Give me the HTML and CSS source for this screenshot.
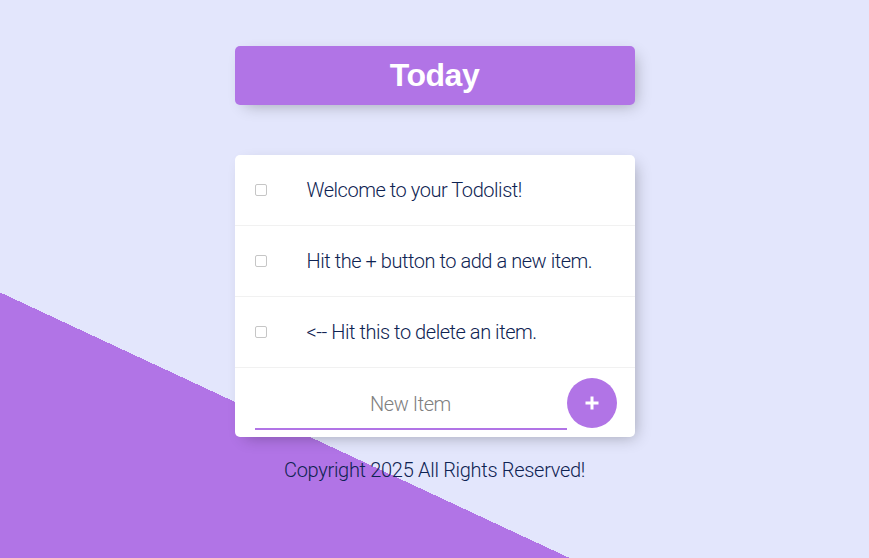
FILE: index.html
```html
<!DOCTYPE html>
<html lang="en">
<head>
<meta charset="utf-8">
<title>To-Do List</title>
<link rel="stylesheet" href="styles.css">
</head>
<body>
  <div class="box heading">
    <h1>Today</h1>
  </div>

  <div class="box list">
    <div class="item">
      <input type="checkbox" class="check">
      <p class="text">Welcome to your Todolist!</p>
    </div>
    <div class="item">
      <input type="checkbox" class="check">
      <p class="text">Hit the + button to add a new item.</p>
    </div>
    <div class="item">
      <input type="checkbox" class="check">
      <p class="text">&lt;-- Hit this to delete an item.</p>
    </div>
    <form class="item add-form">
      <input type="text" class="new-item" name="newItem" placeholder="New Item" autocomplete="off">
      <button type="button" class="add-btn" aria-label="Add">
        <svg width="16" height="16" viewBox="0 0 16 16"><path d="M8 1.5v13M1.5 8h13" stroke="#fff" stroke-width="3" fill="none"/></svg>
      </button>
    </form>
  </div>

  <footer class="footer">Copyright 2025 All Rights Reserved!</footer>
</body>
</html>
```

FILE: styles.css
```css
html {
  background-color: #E3E6FC;
  background-image: linear-gradient(25deg, #B174E6 50%, #E3E6FC 50%);
  min-height: 990px;
}

body {
  margin: 0;
  padding-top: 46px;
  font-family: Roboto, "Liberation Sans", sans-serif;
}

.box {
  width: 400px;
  margin: 0 auto;
  background: #fff;
  border-radius: 5px;
  box-shadow: 5px 5px 15px -5px rgba(0, 0, 0, 0.3);
}

.heading {
  background-color: #B174E6;
  text-align: center;
}

.heading h1 {
  margin: 0;
  padding: 10px;
  color: #fff;
  font-family: "Liberation Sans", Arial, sans-serif;
  font-weight: 700;
  font-size: 32px;
  line-height: 39px;
  letter-spacing: -0.5px;
}

.list {
  margin-top: 50px;
}

.item {
  min-height: 70px;
  display: flex;
  align-items: center;
  border-bottom: 1px solid #F1F1F1;
}

.check {
  appearance: none;
  -webkit-appearance: none;
  box-sizing: border-box;
  margin: 0 20px;
  width: 12px;
  height: 12px;
  border: 1px solid #c6c6c6;
  border-radius: 2px;
  background: #fff;
}

.text {
  margin: 0;
  padding: 0 20px;
  font-size: 20px;
  font-weight: 300;
  letter-spacing: -0.45px;
  color: #0e2352;
}

.add-form {
  border-bottom: 0;
  min-height: 0;
  align-items: flex-start;
  padding: 10px 0 7px 20px;
}

.new-item {
  box-sizing: border-box;
  width: 312px;
  height: 50px;
  margin: 2px 0 0;
  padding: 0;
  border: none;
  border-bottom: 2px solid #B174E6;
  background: transparent;
  text-align: center;
  font-family: Roboto, "Liberation Sans", sans-serif;
  font-size: 20px;
  font-weight: 300;
  letter-spacing: -0.45px;
  color: #0e2352;
  outline: none;
}

.new-item::placeholder {
  color: #808080;
  opacity: 1;
}

.add-btn {
  width: 50px;
  height: 50px;
  padding: 0;
  border: 0;
  border-radius: 50%;
  background-color: #B174E6;
  display: flex;
  align-items: center;
  justify-content: center;
}

.footer {
  margin-top: 21px;
  text-align: center;
  font-size: 20px;
  font-weight: 300;
  line-height: 24px;
  letter-spacing: -0.3px;
  color: #0e2352;
}
```
